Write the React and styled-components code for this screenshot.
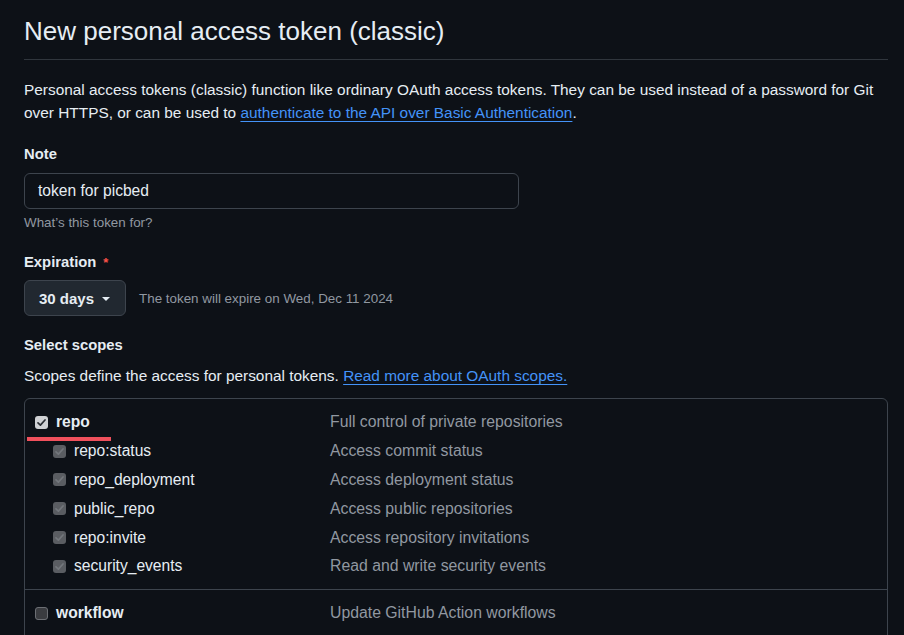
import React from "react";
import styled, { createGlobalStyle, css } from "styled-components";

const Global = createGlobalStyle`
  html, body { margin: 0; padding: 0; background: #0d1117; }
  body {
    color: #e6edf3;
    font-family: "Liberation Sans", Arial, sans-serif;
    -webkit-font-smoothing: antialiased;
  }
  * { box-sizing: border-box; }
`;

const Page = styled.main`
  padding: 11px 16px 0 24px;
  overflow: hidden;
  height: 635px;
`;

const Title = styled.h1`
  margin: 0;
  font-size: 26px;
  font-weight: 400;
  line-height: 40px;
  padding-bottom: 8px;
  border-bottom: 1px solid #30363d;
`;

const Intro = styled.p`
  margin: 18px 0 0;
  font-size: 15.4px;
  line-height: 23px;
`;

const Link = styled.a`
  color: #4493f8;
  text-decoration: underline;
  text-underline-offset: 3px;
  text-decoration-thickness: 1px;
`;

const Label = styled.div`
  margin-top: ${(p) => p.$mt ?? 18}px;
  font-size: 14.8px;
  font-weight: 700;
  line-height: 23px;
`;

const Required = styled.span`
  color: #f85149;
  font-size: 13px;
  margin-left: 7px;
  font-weight: 700;
`;

const TextInput = styled.div`
  margin-top: 7px;
  width: 495px;
  height: 36px;
  display: flex;
  align-items: center;
  padding: 0 13px;
  background: #0d1117;
  border: 1px solid #3d444d;
  border-radius: 6px;
  font-size: 15.6px;
`;

const Hint = styled.div`
  margin-top: 4px;
  font-size: 13.4px;
  line-height: 20px;
  color: #9198a1;
`;

const ExpiryRow = styled.div`
  margin-top: 6px;
  display: flex;
  align-items: center;
  gap: 13px;
`;

const SelectButton = styled.button`
  height: 36px;
  width: 102px;
  display: flex;
  align-items: center;
  gap: 8px;
  padding: 0 14px;
  background: #212830;
  border: 1px solid #3d444d;
  border-radius: 6px;
  color: #e6edf3;
  font-family: inherit;
  font-size: 15px;
  font-weight: 700;
`;

const Caret = styled.span`
  width: 0;
  height: 0;
  border-left: 4px solid transparent;
  border-right: 4px solid transparent;
  border-top: 4px solid #e6edf3;
  margin-top: 1px;
`;

const Muted = styled.span`
  font-size: 13.4px;
  color: #9198a1;
`;

const Desc = styled.p`
  margin: 7px 0 0;
  font-size: 15.4px;
  line-height: 23px;
`;

const ScopeBox = styled.div`
  margin-top: 11px;
  border: 1px solid #3d444d;
  border-radius: 6px;
`;

const Group = styled.section`
  padding: 9px 0 8px;
  & + & { border-top: 1px solid #3d444d; }
`;

const Row = styled.div`
  position: relative;
  display: grid;
  grid-template-columns: 305px 1fr;
  align-items: center;
  height: 28.8px;
  font-size: 15.6px;
`;

const Name = styled.div`
  display: flex;
  align-items: center;
  gap: 8px;
  padding-left: ${(p) => (p.$sub ? 28 : 10)}px;
  font-weight: ${(p) => (p.$sub ? 400 : 700)};
`;

const Description = styled.div`
  color: #9198a1;
  font-size: 15.8px;
`;

const Underline = styled.span`
  position: absolute;
  left: 2px;
  top: 29px;
  width: 84px;
  height: 4px;
  background: #f0505c;
`;

const Box = styled.span`
  width: 13px;
  height: 13px;
  flex: none;
  border-radius: 3px;
  display: inline-flex;
  align-items: center;
  justify-content: center;
  ${(p) =>
    p.$state === "checked"
      ? css`background: #cfd1d4; color: #2a2e34;`
      : p.$state === "disabled"
      ? css`background: #5a5d62; color: #73777c;`
      : css`background: #3a3c40; border: 1px solid #6c6f74;`}
`;

function Checkbox({ state }) {
  return (
    <Box $state={state}>
      {state !== "unchecked" && (
        <svg width="11" height="11" viewBox="0 0 11 11" fill="none">
          <path d="M2 5.8 L4.4 8.1 L9 3" stroke="currentColor" strokeWidth="1.7" strokeLinecap="round" strokeLinejoin="round" />
        </svg>
      )}
    </Box>
  );
}

const groups = [
  {
    name: "repo",
    desc: "Full control of private repositories",
    checked: true,
    mark: true,
    subs: [
      ["repo:status", "Access commit status"],
      ["repo_deployment", "Access deployment status"],
      ["public_repo", "Access public repositories"],
      ["repo:invite", "Access repository invitations"],
      ["security_events", "Read and write security events"],
    ],
  },
  { name: "workflow", desc: "Update GitHub Action workflows", checked: false, subs: [] },
  {
    name: "write:packages",
    desc: "Upload packages to GitHub Package Registry",
    checked: false,
    subs: [["read:packages", "Download packages from GitHub Package Registry"]],
  },
];

export default function App() {
  return (
    <>
      <Global />
      <Page>
        <Title>New personal access token (classic)</Title>
        <Intro>
          Personal access tokens (classic) function like ordinary OAuth access tokens. They can be used instead of a
          password for Git over HTTPS, or can be used to{" "}
          <Link href="#">authenticate to the API over Basic Authentication</Link>.
        </Intro>

        <Label $mt={19}>Note</Label>
        <TextInput>token for picbed</TextInput>
        <Hint>What’s this token for?</Hint>

        <Label>
          Expiration<Required>*</Required>
        </Label>
        <ExpiryRow>
          <SelectButton>
            30 days <Caret />
          </SelectButton>
          <Muted>The token will expire on Wed, Dec 11 2024</Muted>
        </ExpiryRow>

        <Label>Select scopes</Label>
        <Desc>
          Scopes define the access for personal tokens. <Link href="#">Read more about OAuth scopes.</Link>
        </Desc>

        <ScopeBox>
          {groups.map((g) => (
            <Group key={g.name}>
              <Row>
                <Name>
                  <Checkbox state={g.checked ? "checked" : "unchecked"} />
                  {g.name}
                </Name>
                <Description>{g.desc}</Description>
                {g.mark && <Underline />}
              </Row>
              {g.subs.map(([n, d]) => (
                <Row key={n}>
                  <Name $sub>
                    <Checkbox state={g.checked ? "disabled" : "unchecked"} />
                    {n}
                  </Name>
                  <Description>{d}</Description>
                </Row>
              ))}
            </Group>
          ))}
        </ScopeBox>
      </Page>
    </>
  );
}
